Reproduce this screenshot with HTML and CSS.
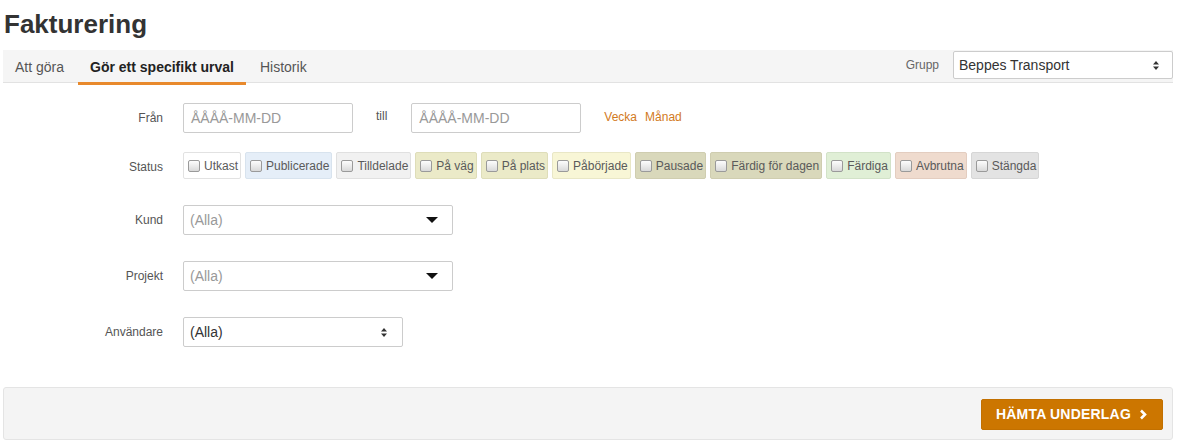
FILE: index.html
```html
<!DOCTYPE html>
<html lang="sv">
<head>
<meta charset="utf-8">
<title>Fakturering</title>
<link rel="stylesheet" href="styles.css">
</head>
<body>
<div class="page">
  <h1 class="title">Fakturering</h1>
  <div class="tabbar">
    <nav class="tabs">
      <a class="tab">Att göra</a>
      <a class="tab active">Gör ett specifikt urval</a>
      <a class="tab">Historik</a>
    </nav>
    <div class="group">
      <span class="group-label">Grupp</span>
      <div class="select select-group">
        <span class="select-text dark">Beppes Transport</span>
        <svg class="updown" width="8" height="11" viewBox="0 0 8 11"><path d="M4 1 L7 4.5 H1 Z M4 10 L7 6.5 H1 Z" fill="#333"/></svg>
      </div>
    </div>
  </div>

  <form class="form">
    <div class="row row-date">
      <label class="label">Från</label>
      <div class="field dates">
        <div class="input"><span class="placeholder">ÅÅÅÅ-MM-DD</span></div>
        <span class="till">till</span>
        <div class="input"><span class="placeholder">ÅÅÅÅ-MM-DD</span></div>
        <a class="quick">Vecka</a>
        <a class="quick">Månad</a>
      </div>
    </div>

    <div class="row row-status">
      <label class="label">Status</label>
      <div class="field pills">
        <span class="pill p-utkast"><span class="cb"></span>Utkast</span>
        <span class="pill p-publ"><span class="cb"></span>Publicerade</span>
        <span class="pill p-till"><span class="cb"></span>Tilldelade</span>
        <span class="pill p-olive"><span class="cb"></span>På väg</span>
        <span class="pill p-olive"><span class="cb"></span>På plats</span>
        <span class="pill p-yellow"><span class="cb"></span>Påbörjade</span>
        <span class="pill p-dark"><span class="cb"></span>Pausade</span>
        <span class="pill p-dark"><span class="cb"></span>Färdig för dagen</span>
        <span class="pill p-green"><span class="cb"></span>Färdiga</span>
        <span class="pill p-red"><span class="cb"></span>Avbrutna</span>
        <span class="pill p-gray"><span class="cb"></span>Stängda</span>
      </div>
    </div>

    <div class="row row-select">
      <label class="label">Kund</label>
      <div class="field">
        <div class="select select-wide">
          <span class="select-text muted">(Alla)</span>
          <svg class="caret" width="12" height="6" viewBox="0 0 12 6"><path d="M0 0 H12 L6 6 Z" fill="#111"/></svg>
        </div>
      </div>
    </div>

    <div class="row row-select">
      <label class="label">Projekt</label>
      <div class="field">
        <div class="select select-wide">
          <span class="select-text muted">(Alla)</span>
          <svg class="caret" width="12" height="6" viewBox="0 0 12 6"><path d="M0 0 H12 L6 6 Z" fill="#111"/></svg>
        </div>
      </div>
    </div>

    <div class="row row-select">
      <label class="label">Användare</label>
      <div class="field">
        <div class="select select-narrow">
          <span class="select-text dark">(Alla)</span>
          <svg class="updown" width="8" height="11" viewBox="0 0 8 11"><path d="M4 1 L7 4.5 H1 Z M4 10 L7 6.5 H1 Z" fill="#333"/></svg>
        </div>
      </div>
    </div>
  </form>

  <div class="footer">
    <button class="btn" type="button">HÄMTA UNDERLAG
      <svg width="9" height="11" viewBox="0 0 9 11"><path d="M2 1.5 L6 5.5 L2 9.5" fill="none" stroke="#fff" stroke-width="2.6"/></svg>
    </button>
  </div>
</div>
</body>
</html>
```

FILE: styles.css
```css
* { box-sizing: border-box; }

html, body {
  margin: 0;
  padding: 0;
  background: #fff;
  font-family: "Liberation Sans", Arial, sans-serif;
  color: #333;
}

.page {
  width: 1170px;
  margin-left: 3px;
}

.title {
  margin: 0;
  padding: 9px 0 0 1px;
  height: 50px;
  font-size: 26px;
  font-weight: bold;
  color: #333;
  line-height: 30px;
}

.tabbar {
  display: flex;
  justify-content: space-between;
  align-items: flex-start;
  height: 33px;
  background: #f5f5f5;
  border-bottom: 1px solid #e2e2e2;
}

.tabs {
  display: flex;
  gap: 2px;
}

.tab {
  display: block;
  height: 32px;
  line-height: 34px;
  padding: 0 12px;
  font-size: 14px;
  color: #555;
  cursor: pointer;
}

.tab.active {
  height: 35px;
  font-weight: bold;
  color: #222;
  border-bottom: 3px solid #e8892c;
}

.group {
  display: flex;
  align-items: center;
  gap: 14px;
  padding-top: 1px;
}

.group-label {
  font-size: 12px;
  color: #666;
}

.select {
  display: flex;
  align-items: center;
  justify-content: space-between;
  border: 1px solid #ccc;
  border-radius: 2px;
  background: #fff;
  padding: 0 12px 0 6px;
}

.select-group {
  width: 220px;
  height: 28px;
  padding-left: 5px;
}

.select-text {
  font-size: 14px;
}

.dark { color: #333; }
.muted { color: #999; }

.form {
  padding-top: 20px;
  padding-bottom: 40px;
}

.row {
  display: grid;
  grid-template-columns: 160px 1fr;
  column-gap: 20px;
  align-items: center;
}

.label {
  text-align: right;
  font-size: 12px;
  color: #555;
}

.row-date { margin-bottom: 19px; }
.row-status { margin-bottom: 26px; }
.row-status .label { padding-top: 3px; }
.row-select { margin-bottom: 26px; }
.row-select:last-child { margin-bottom: 0; }

.dates {
  display: flex;
  align-items: center;
}

.input {
  width: 170px;
  height: 30px;
  border: 1px solid #ccc;
  border-radius: 2px;
  display: flex;
  align-items: center;
  padding-left: 7px;
}

.placeholder {
  font-size: 14px;
  color: #999;
}

.till {
  font-size: 12px;
  color: #555;
  margin: 0 24px 0 23px;
  padding-bottom: 4px;
}

.quick {
  font-size: 12px;
  color: #d27a1c;
  margin-left: 23px;
  padding-bottom: 3px;
  cursor: pointer;
}

.quick + .quick { margin-left: 8px; }

.pills {
  display: flex;
  gap: 4px;
}

.pill {
  display: flex;
  align-items: center;
  gap: 4px;
  height: 27px;
  padding: 0 2px 0 4px;
  border: 1px solid #ddd;
  border-radius: 2px;
  font-size: 12px;
  color: #5a5a5a;
  white-space: nowrap;
}

.cb {
  width: 12px;
  height: 12px;
  border: 1px solid #9a9a9a;
  border-radius: 2px;
  background: linear-gradient(#fdfdfd, #d9d9d9);
  flex: none;
}

.p-utkast { background: #fff; border-color: #e2e2e2; }
.p-publ { background: #e5eef8; border-color: #d8e3ee; }
.p-till { background: #f1f1f1; border-color: #e0e0e0; }
.p-olive { background: #ebeac8; border-color: #deddb9; }
.p-yellow { background: #f8f6d6; border-color: #e9e7c6; }
.p-dark { background: #d9d8bb; border-color: #cfcdb0; }
.p-green { background: #e0efd6; border-color: #d2e2c8; }
.p-red { background: #efdbce; border-color: #e3cdc0; }
.p-gray { background: #e3e3e3; border-color: #d6d6d6; }

.select-wide {
  width: 270px;
  height: 30px;
  padding-right: 14px;
}

.select-narrow {
  width: 220px;
  height: 30px;
  padding-right: 14px;
}

.footer {
  display: flex;
  justify-content: flex-end;
  align-items: center;
  height: 53px;
  background: #f4f4f4;
  border: 1px solid #e4e4e4;
  border-radius: 3px;
  padding-right: 9px;
}

.btn {
  display: flex;
  align-items: center;
  gap: 8px;
  width: 182px;
  height: 31px;
  justify-content: center;
  background: #cc7600;
  color: #fff;
  border: 1px solid #c27000;
  border-radius: 2px;
  font-family: "Liberation Sans", Arial, sans-serif;
  font-weight: bold;
  font-size: 14px;
  letter-spacing: 0.2px;
  padding: 0;
  margin-top: 1px;
}
```
